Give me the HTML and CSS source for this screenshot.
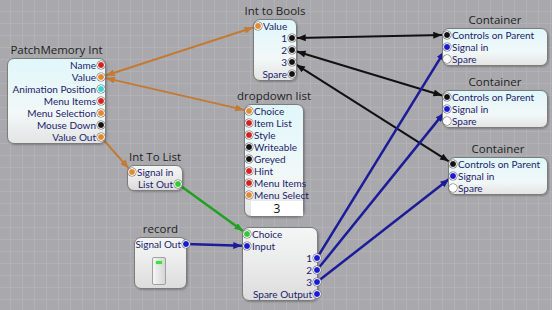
FILE: index.html
```html
<!DOCTYPE html>
<html lang="en">
<head>
    <meta charset="UTF-8">
    <title>Patch Editor</title>
    <link rel="stylesheet" href="styles.css">
</head>
<body>
    <div class="canvas">
        <!-- Wires -->
        <svg class="wires" width="552" height="310" viewBox="0 0 552 310">
            <defs>
                <marker id="arOrange" viewBox="0 0 10 8" refX="10" refY="4" markerWidth="9" markerHeight="7" markerUnits="userSpaceOnUse" orient="auto-start-reverse">
                    <path d="M0,0 L10,4 L0,8 z" fill="#c27a34"/>
                </marker>
                <marker id="arBlack" viewBox="0 0 10 8" refX="10" refY="4" markerWidth="9" markerHeight="7" markerUnits="userSpaceOnUse" orient="auto-start-reverse">
                    <path d="M0,0 L10,4 L0,8 z" fill="#111"/>
                </marker>
                <marker id="arBlue" viewBox="0 0 10 8" refX="10" refY="4" markerWidth="9" markerHeight="7" markerUnits="userSpaceOnUse" orient="auto-start-reverse">
                    <path d="M0,0 L10,4 L0,8 z" fill="#1c1c9a"/>
                </marker>
                <marker id="arGreen" viewBox="0 0 10 8" refX="10" refY="4" markerWidth="9" markerHeight="7" markerUnits="userSpaceOnUse" orient="auto-start-reverse">
                    <path d="M0,0 L10,4 L0,8 z" fill="#22a022"/>
                </marker>
            </defs>
            <line class="w-orange" x1="105.8" y1="75.5" x2="253.2" y2="27.5" marker-start="url(#arOrange)" marker-end="url(#arOrange)"/>
            <line class="w-orange" x1="105.9" y1="78.1" x2="244.1" y2="109.9" marker-start="url(#arOrange)" marker-end="url(#arOrange)"/>
            <line class="w-orange" x1="101" y1="137" x2="128.7" y2="168.3" marker-end="url(#arOrange)"/>

            <line class="w-black" x1="297" y1="37.9" x2="442" y2="35.1" marker-start="url(#arBlack)" marker-end="url(#arBlack)"/>
            <line class="w-black" x1="296.8" y1="51.5" x2="442.2" y2="95.5" marker-start="url(#arBlack)" marker-end="url(#arBlack)"/>
            <line class="w-black" x1="296.2" y1="64.7" x2="448.8" y2="161.3" marker-start="url(#arBlack)" marker-end="url(#arBlack)"/>

            <line class="w-blue" x1="317" y1="258" x2="444.4" y2="51.3" marker-end="url(#arBlue)"/>
            <line class="w-blue" x1="317" y1="270" x2="443.9" y2="112.9" marker-end="url(#arBlue)"/>
            <line class="w-blue" x1="317" y1="282" x2="449.1" y2="179.1" marker-end="url(#arBlue)"/>
            <line class="w-blue" x1="186" y1="244" x2="242" y2="245.8" marker-end="url(#arBlue)"/>

            <line class="w-green" x1="178" y1="184" x2="243" y2="231.1" marker-end="url(#arGreen)"/>
        </svg>

        <!-- PatchMemory Int -->
        <div class="node n-patch">
            <div class="title">PatchMemory Int</div>
            <div class="box">
                <div class="row out">Name<span class="pin red"></span></div>
                <div class="row out">Value<span class="pin orange"></span></div>
                <div class="row out">Animation Position<span class="pin cyan"></span></div>
                <div class="row out">Menu Items<span class="pin red"></span></div>
                <div class="row out">Menu Selection<span class="pin orange"></span></div>
                <div class="row out">Mouse Down<span class="pin black"></span></div>
                <div class="row out">Value Out<span class="pin orange"></span></div>
            </div>
        </div>

        <!-- Int to Bools -->
        <div class="node n-bools">
            <div class="title">Int to Bools</div>
            <div class="box">
                <div class="row"><span class="pin orange"></span>Value</div>
                <div class="row out">1<span class="pin black"></span></div>
                <div class="row out">2<span class="pin black"></span></div>
                <div class="row out">3<span class="pin black"></span></div>
                <div class="row out">Spare<span class="pin black"></span></div>
            </div>
        </div>

        <!-- Containers -->
        <div class="node n-cont1">
            <div class="title">Container</div>
            <div class="box">
                <div class="row"><span class="pin black"></span>Controls on Parent</div>
                <div class="row"><span class="pin blue"></span>Signal in</div>
                <div class="row"><span class="pin white"></span>Spare</div>
            </div>
        </div>
        <div class="node n-cont2">
            <div class="title">Container</div>
            <div class="box">
                <div class="row"><span class="pin black"></span>Controls on Parent</div>
                <div class="row"><span class="pin blue"></span>Signal in</div>
                <div class="row"><span class="pin white"></span>Spare</div>
            </div>
        </div>
        <div class="node n-cont3">
            <div class="title">Container</div>
            <div class="box">
                <div class="row"><span class="pin black"></span>Controls on Parent</div>
                <div class="row"><span class="pin blue"></span>Signal in</div>
                <div class="row"><span class="pin white"></span>Spare</div>
            </div>
        </div>

        <!-- dropdown list -->
        <div class="node n-drop">
            <div class="title">dropdown list</div>
            <div class="box">
                <div class="row"><span class="pin orange"></span>Choice</div>
                <div class="row"><span class="pin red"></span>Item List</div>
                <div class="row"><span class="pin red"></span>Style</div>
                <div class="row"><span class="pin black"></span>Writeable</div>
                <div class="row"><span class="pin black"></span>Greyed</div>
                <div class="row"><span class="pin red"></span>Hint</div>
                <div class="row"><span class="pin red"></span>Menu Items</div>
                <div class="row"><span class="pin orange"></span>Menu Select</div>
                <div class="value-field">3</div>
            </div>
        </div>

        <!-- Int To List -->
        <div class="node n-list">
            <div class="title">Int To List</div>
            <div class="box plain">
                <div class="row"><span class="pin orange"></span>Signal in</div>
                <div class="row out">List Out<span class="pin green"></span></div>
            </div>
        </div>

        <!-- record -->
        <div class="node n-record">
            <div class="title">record</div>
            <div class="box plain">
                <div class="row out">Signal Out<span class="pin blue edge"></span></div>
                <div class="toggle"><div class="led"></div></div>
            </div>
        </div>

        <!-- Switch -->
        <div class="node n-switch">
            <div class="box plain">
                <div class="row"><span class="pin green"></span>Choice</div>
                <div class="row"><span class="pin blue"></span>Input</div>
                <div class="row out">1<span class="pin blue edge"></span></div>
                <div class="row out">2<span class="pin blue edge"></span></div>
                <div class="row out">3<span class="pin blue edge"></span></div>
                <div class="row out">Spare Output<span class="pin blue edge"></span></div>
            </div>
        </div>
    </div>
</body>
</html>
```

FILE: styles.css
```css
body {
    margin: 0;
    font-family: "Open Sans", Arial, sans-serif;
}

/* Canvas with grid */
.canvas {
    position: relative;
    width: 552px;
    height: 310px;
    overflow: hidden;
    background-color: #a9a9ad;
    background-image:
        linear-gradient(to right, #b2b2b6 1px, transparent 1px),
        linear-gradient(to bottom, #b2b2b6 1px, transparent 1px);
    background-size: 12px 12px;
    background-position: 10px 11px;
}

.wires {
    position: absolute;
    left: 0;
    top: 0;
}

.wires line {
    fill: none;
}

.w-orange { stroke: #c27a34; stroke-width: 2; }
.w-black { stroke: #111; stroke-width: 2; }
.w-blue { stroke: #1c1c9a; stroke-width: 2.5; }
.w-green { stroke: #22a022; stroke-width: 2.5; }

/* Nodes */
.node {
    position: absolute;
}

.n-patch { left: 7px; top: 42px; width: 99px; }
.n-bools { left: 253px; top: 3px; width: 44px; }
.n-cont1 { left: 442px; top: 12px; width: 106px; }
.n-cont2 { left: 442px; top: 74px; width: 106px; }
.n-cont3 { left: 448px; top: 141px; width: 100px; }
.n-drop { left: 244px; top: 88px; width: 60px; }
.n-list { left: 127px; top: 149px; width: 56px; }
.n-record { left: 134px; top: 221px; width: 53px; }
.n-switch { left: 242px; top: 227px; width: 76px; }

.title {
    height: 16px;
    line-height: 16px;
    display: flex;
    justify-content: center;
    white-space: nowrap;
    font-size: 11.5px;
    color: #1e1e1e;
}

.box {
    border: 1px solid #7c7c7c;
    border-radius: 7px;
    background: linear-gradient(#e0f7fa, #f2f8f8 65%, #e4e4e4);
    box-shadow: 1px 1px 2px rgba(0, 0, 0, 0.25);
}

.box.plain {
    background: linear-gradient(#f4f6f6, #e8e8e8 60%, #dcdcdc);
}

.row {
    height: 12px;
    display: flex;
    align-items: center;
    gap: 1px;
    font-family: Lato, "Open Sans", sans-serif;
    font-size: 10px;
    color: #1b1b6b;
    white-space: nowrap;
}

.row.out {
    justify-content: flex-end;
}

.pin {
    flex: none;
    width: 6px;
    height: 6px;
    border-radius: 50%;
    border: 1px solid #fff;
    box-shadow: 0 0 0 0.5px #777;
}

.pin.edge {
    margin-right: -4px;
}

.red { background: #d42222; }
.orange { background: #e08a34; }
.cyan { background: #3cd4d0; }
.black { background: #111; }
.blue { background: #1a1ad0; }
.green { background: #34c834; }
.white { background: #fff; }

.value-field {
    margin-left: 6px;
    height: 15px;
    line-height: 15px;
    background: #fff;
    text-align: center;
    font-size: 12px;
    color: #111;
}

/* record toggle */
.toggle {
    width: 12px;
    height: 26px;
    margin: 7px 0 3px 17px;
    border: 1px solid #a0a0a0;
    border-radius: 2px;
    background: linear-gradient(to right, #f6f6f6, #d6d6d6);
}

.led {
    width: 6px;
    height: 3px;
    margin: 3px auto 0;
    background: #3ee03e;
    box-shadow: 0 0 2px #7f7;
}
```
